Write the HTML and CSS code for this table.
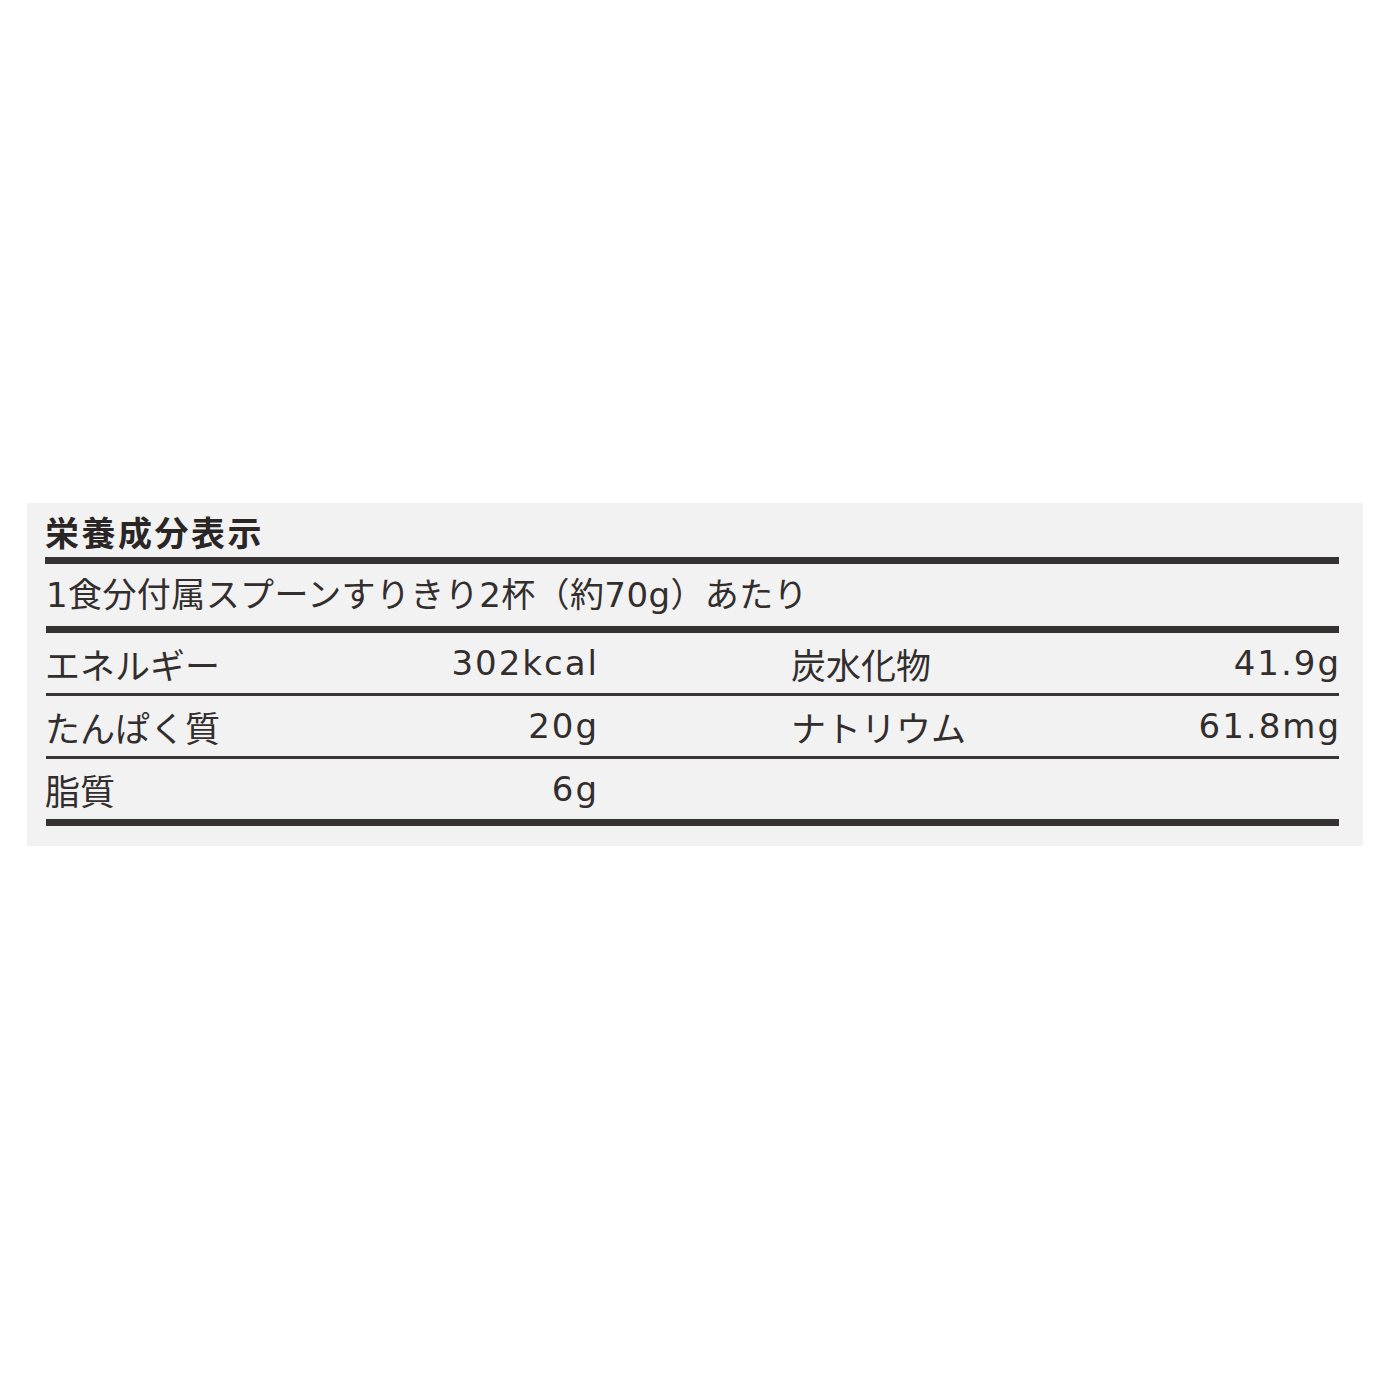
FILE: index.html
```html
<!DOCTYPE html>
<html lang="ja">
<head>
<meta charset="utf-8">
<title>栄養成分表示</title>
<link rel="stylesheet" href="styles.css">
</head>
<body>
<section class="panel">
  <h1 class="title">栄養成分表示</h1>
  <p class="serving">1食分付属スプーンすりきり2杯（約70g）あたり</p>
  <div class="row">
    <div class="cell"><span class="label">エネルギー</span><span class="value">302kcal</span></div>
    <div class="cell"><span class="label">炭水化物</span><span class="value">41.9g</span></div>
  </div>
  <div class="row">
    <div class="cell"><span class="label">たんぱく質</span><span class="value">20g</span></div>
    <div class="cell"><span class="label">ナトリウム</span><span class="value">61.8mg</span></div>
  </div>
  <div class="row last">
    <div class="cell"><span class="label">脂質</span><span class="value">6g</span></div>
    <div class="cell"></div>
  </div>
</section>
</body>
</html>
```

FILE: styles.css
```css
html, body {
  margin: 0;
  padding: 0;
  background: #ffffff;
}

body {
  font-family: "Noto Sans CJK JP", sans-serif;
  color: #322e2e;
}

.panel {
  box-sizing: border-box;
  width: 1336px;
  height: 343px;
  margin: 503px 0 0 27px;
  padding: 8px 24px 20px 19px;
  background: #f2f2f2;
}

.title {
  margin: 0 0 0 -1px;
  height: 46px;
  line-height: 42px;
  font-size: 34px;
  font-weight: 700;
  letter-spacing: 2.5px;
  border-bottom: 7px solid #363232;
  color: #2a2626;
}

.serving {
  margin: 0;
  height: 62px;
  line-height: 62px;
  font-family: "DejaVu Sans", "Noto Sans CJK JP", sans-serif;
  font-size: 34px;
  letter-spacing: 0.4px;
  border-bottom: 7px solid #363232;
  white-space: nowrap;
}

.row {
  display: grid;
  grid-template-columns: 551px 547px;
  column-gap: 195px;
  height: 60px;
  border-bottom: 3px solid #3a3636;
}

.row.last {
  border-bottom: 7px solid #363232;
}

.cell {
  display: flex;
  justify-content: space-between;
  align-items: center;
}

.label {
  font-size: 35px;
  margin-left: -1px;
}

.value {
  font-family: "DejaVu Sans", sans-serif;
  font-size: 34px;
  letter-spacing: 2px;
  margin-right: -2px;
}
```
